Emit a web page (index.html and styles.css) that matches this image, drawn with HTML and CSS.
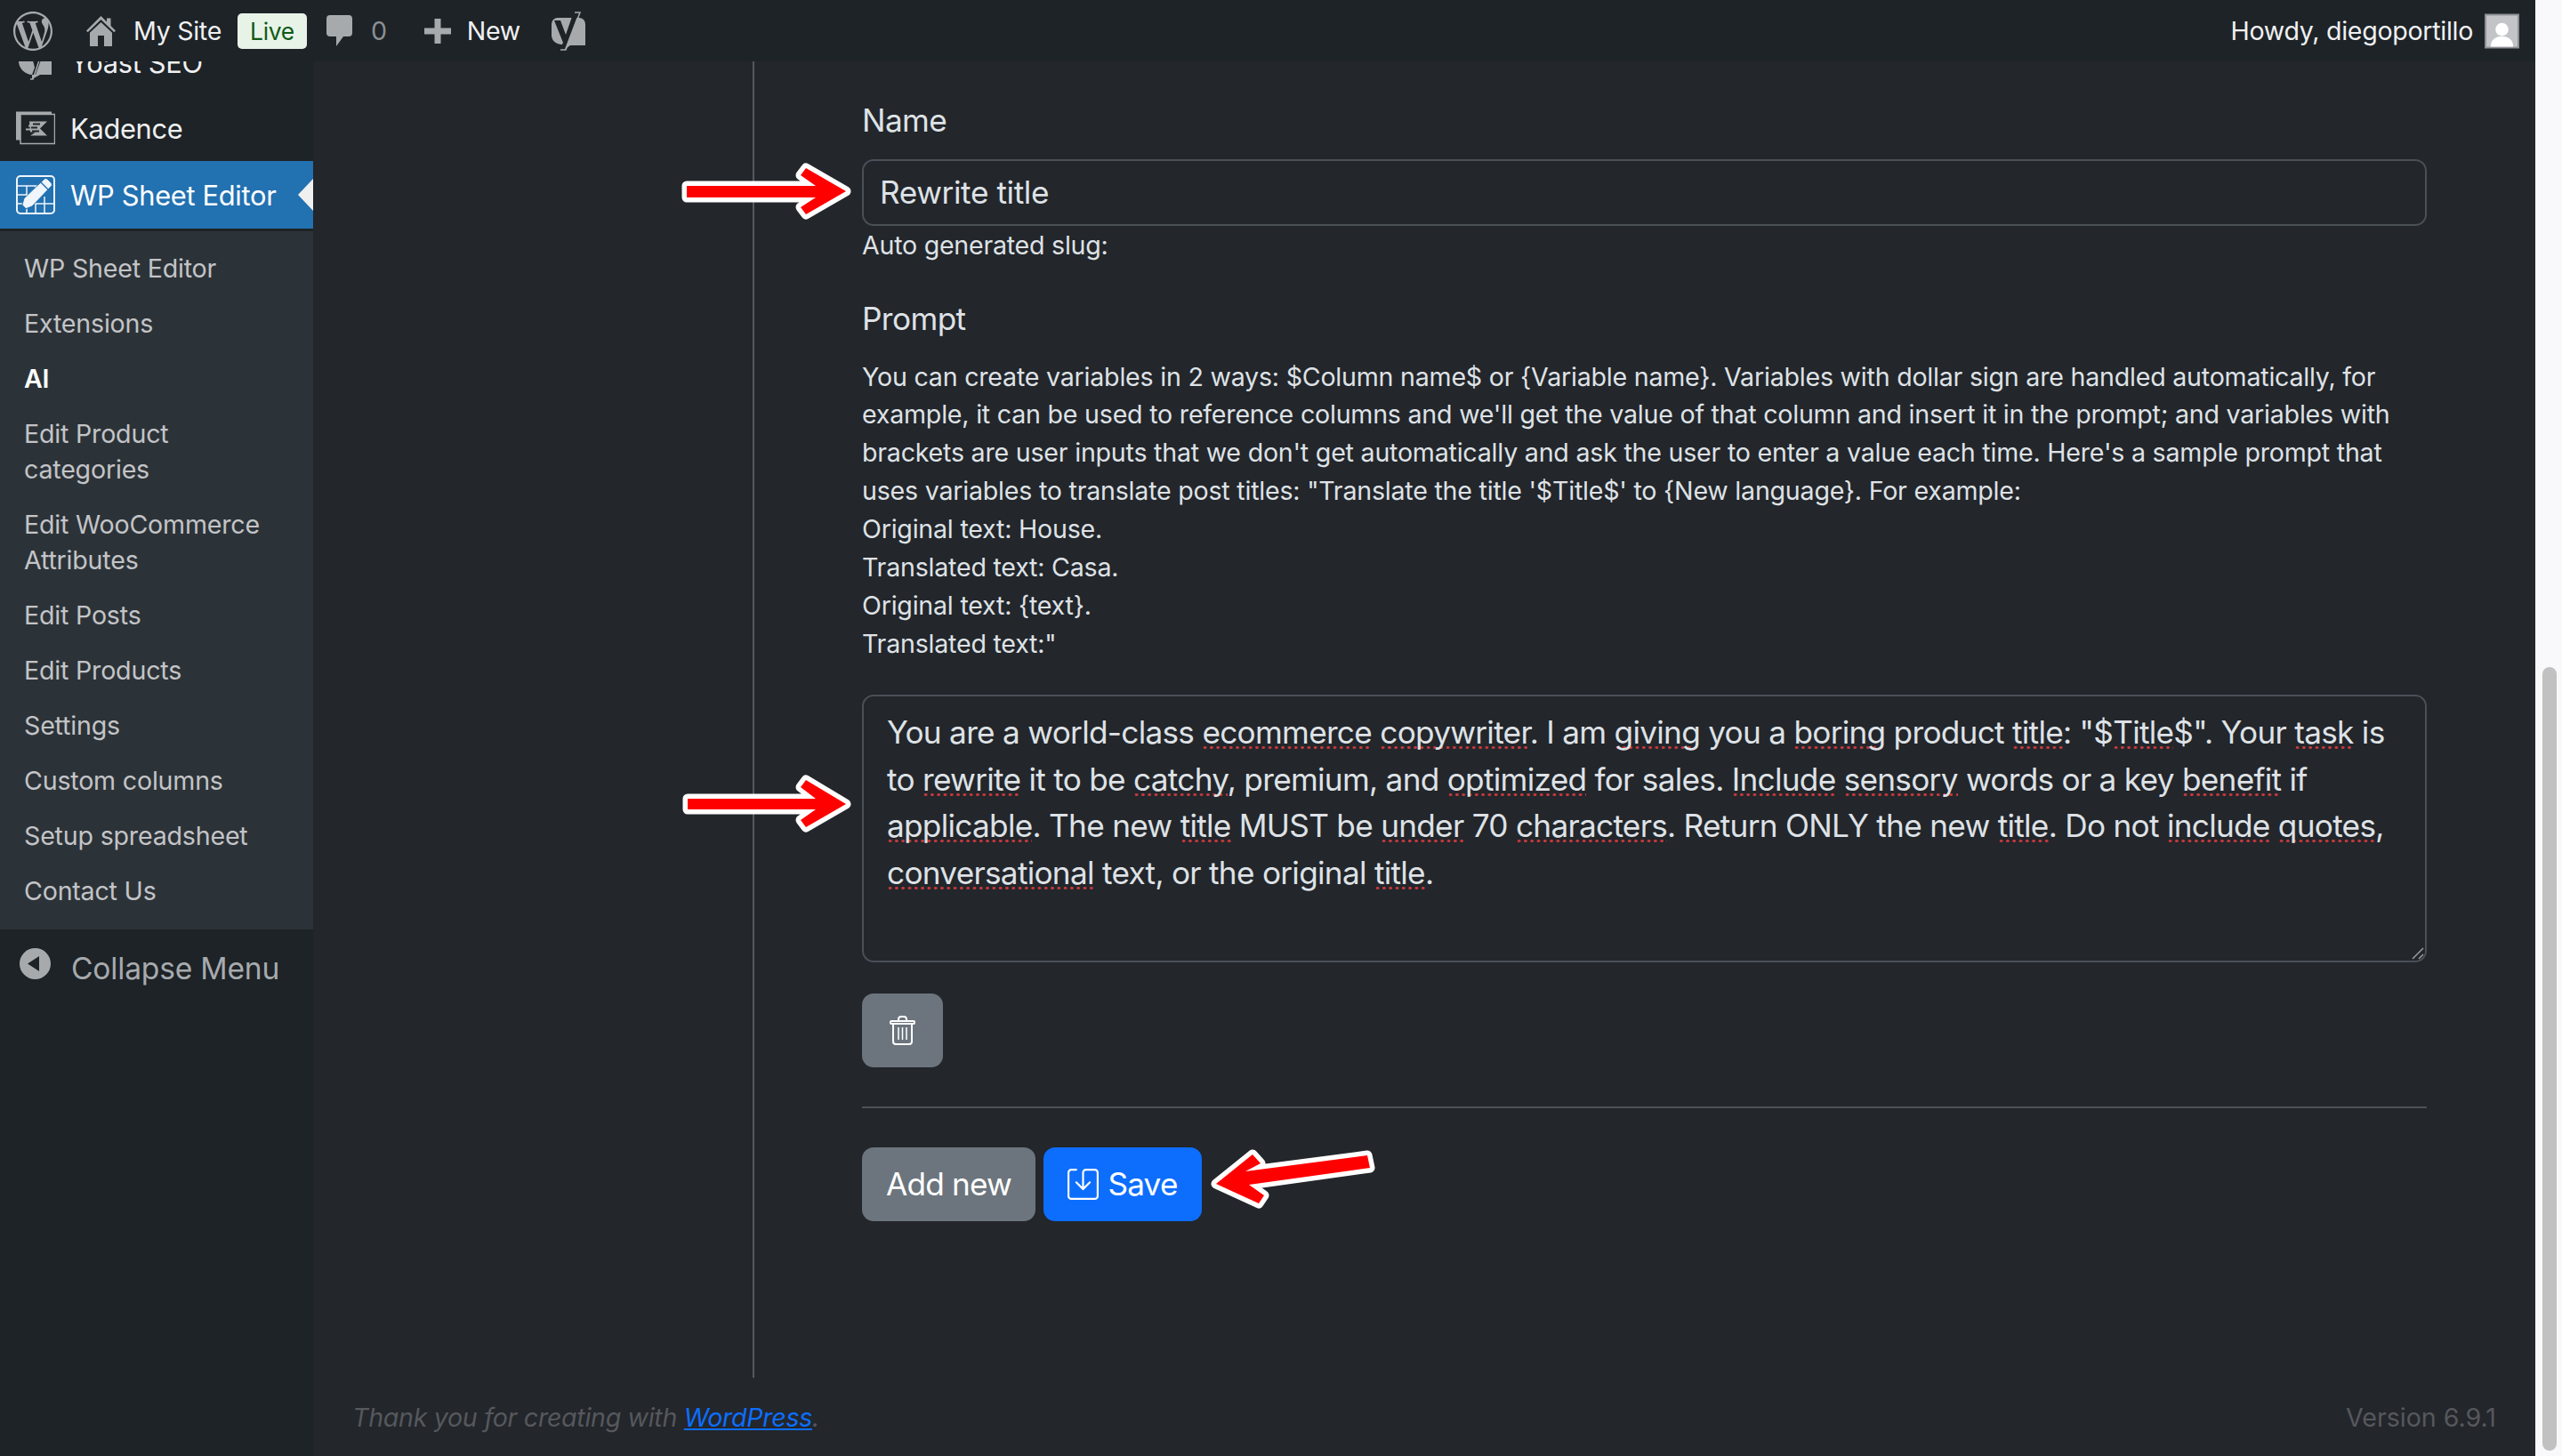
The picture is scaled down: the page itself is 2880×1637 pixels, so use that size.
FILE: index.html
```html
<!DOCTYPE html>
<html lang="en">
<head>
<meta charset="utf-8">
<title>WP Sheet Editor</title>
<link rel="stylesheet" href="styles.css">
</head>
<body>
<div class="window">
  <div class="page">
    <header class="topbar">
      <svg class="wp-logo" viewBox="0 0 24 24"><path fill="#a7aaad" d="M21.469 6.825c.84 1.537 1.318 3.3 1.318 5.175 0 3.979-2.156 7.456-5.363 9.325l3.295-9.527c.615-1.54.82-2.771.82-3.864 0-.405-.026-.78-.07-1.11m-7.981.105c.647-.03 1.232-.105 1.232-.105.582-.075.514-.93-.067-.899 0 0-1.755.135-2.88.135-1.064 0-2.85-.15-2.85-.15-.585-.03-.661.855-.075.885 0 0 .54.061 1.125.09l1.68 4.605-2.37 7.08L5.354 6.9c.649-.03 1.234-.1 1.234-.1.585-.075.516-.93-.065-.896 0 0-1.746.138-2.874.138-.2 0-.438-.008-.69-.015C4.911 3.15 8.235 1.215 12 1.215c2.809 0 5.365 1.072 7.286 2.833-.046-.003-.091-.009-.141-.009-1.06 0-1.812.923-1.812 1.914 0 .89.513 1.643 1.06 2.531.411.72.89 1.643.89 2.977 0 .915-.354 1.994-.821 3.479l-1.075 3.585-3.9-11.61.001.014zM12 22.784c-1.059 0-2.081-.153-3.048-.437l3.237-9.406 3.315 9.087c.024.053.05.101.078.149-1.12.393-2.325.609-3.582.609M1.211 12c0-1.564.336-3.05.935-4.39L7.29 21.709C3.694 19.96 1.212 16.271 1.211 12M12 0C5.385 0 0 5.385 0 12s5.385 12 12 12 12-5.385 12-12S18.615 0 12 0"/></svg>
      <svg class="ic-home" viewBox="0 0 33 34"><path fill="#a7aaad" d="M16.500 0 23 6.500V2.500h4.500V11L33 16.500l-1.700 1.700L16.500 4 1.700 18.200 0 16.500z"/><path fill="#a7aaad" fill-rule="evenodd" d="M16.500 7 29 18.800V34H4V18.800zM13 22v12h7V22z"/></svg>
      <span class="bar-text site">My Site</span>
      <span class="live">Live</span>
      <svg class="ic-comment" viewBox="0 0 29 35"><path fill="#a7aaad" d="M4 0h21a4 4 0 0 1 4 4v16a4 4 0 0 1-4 4H19L11 35V24H4a4 4 0 0 1-4-4V4a4 4 0 0 1 4-4z"/></svg>
      <span class="bar-text zero">0</span>
      <svg class="ic-plus" viewBox="0 0 30 28"><path fill="#a7aaad" d="M11.500 0h7v10.500H30v7H18.500V28h-7V17.500H0v-7h11.500z"/></svg>
      <span class="bar-text new">New</span>
      <svg class="ic-yoast" viewBox="0 0 38 44"><path fill="#a7aaad" d="M7 7h24a7 7 0 0 1 7 7v24H21l-7 5v-5l-3-1a11 11 0 0 1-11-9V14a7 7 0 0 1 7-7z"/><path fill="#1d2327" d="M31 0h-6L16 26 10 10H3l10 25-4 7h6z"/><path fill="none" stroke="#a7aaad" stroke-width="1.500" d="M26 1h6L16 43h-6"/></svg>
      <span class="bar-text howdy">Howdy, diegoportillo</span>
      <svg class="avatar" viewBox="0 0 40 40"><rect width="40" height="40" fill="#8c8f94"/><rect x="2" y="2" width="36" height="36" fill="#c3c4c7"/><circle cx="20" cy="18" r="7.500" fill="#fff"/><path fill="#fff" d="M7 38c0-8 6-12 13-12s13 4 13 12z"/></svg>
    </header>
    <div class="below">
      <nav class="sidebar">
        <a class="menu-item clipped">
          <svg class="menu-ic" viewBox="0 0 44 44"><path fill="#a7aaad" d="M3 0h37v36H27l-9 5V36A16 16 0 0 1 3 22z"/><path fill="#1d2327" d="M14 0h7l3 16 6-16h5L22 36h-4l3-8z"/><path fill="none" stroke="#a7aaad" stroke-width="1.500" d="M30 8 19 41h-3"/></svg>
          <span>Yoast SEO</span>
        </a>
        <a class="menu-item">
          <svg class="menu-ic" viewBox="0 0 44 37"><path fill="#a7aaad" d="M0 0h40v3H5v29H0z"/><rect x="5" y="3" width="38.500" height="33" fill="#1d2327" stroke="#a7aaad" stroke-width="1.500"/><path fill="#a7aaad" d="M15 11h20l-8 8 8 8H16l6-4h-6zM14 15h9v2h-9zM11 19h8v2h-8z"/><path fill="#1d2327" d="M19 13h8v2h-8zM17 17h7v2h-7zM18 21h8v2h-8z"/></svg>
          <span>Kadence</span>
        </a>
        <a class="menu-item active">
          <svg class="menu-ic" viewBox="0 0 44 44"><rect x="1" y="1" width="42" height="42" rx="4" fill="none" stroke="#f0f6fc" stroke-width="2"/><path fill="none" stroke="#f0f6fc" stroke-width="1.500" d="M1 12h30M1 22h14M1 32h42M12 12v32M22 32v12M32 32v12M22 12v6M32 24v8"/><path fill="#f0f6fc" stroke="#2271b1" stroke-width="1" d="M5 40 9 26 31 5a3 3 0 0 1 4-1l5 5a3 3 0 0 1-1 4L18 35z"/><path fill="#2271b1" d="M5 40l2-7 5 5z"/><path fill="none" stroke="#2271b1" stroke-width="1.500" d="M28 8l8 8"/></svg>
          <span>WP Sheet Editor</span>
          <i class="pointer"></i>
        </a>
        <ul class="submenu">
          <li>WP Sheet Editor</li>
          <li>Extensions</li>
          <li class="current">AI</li>
          <li>Edit Product categories</li>
          <li>Edit WooCommerce Attributes</li>
          <li>Edit Posts</li>
          <li>Edit Products</li>
          <li>Settings</li>
          <li>Custom columns</li>
          <li>Setup spreadsheet</li>
          <li>Contact Us</li>
        </ul>
        <a class="collapse">
          <svg class="collapse-ic" viewBox="0 0 35 35"><circle cx="17.500" cy="17.500" r="17.500" fill="#a7aaad"/><path fill="#1d2327" d="M9 17.500 22 9v17z"/></svg>
          <span>Collapse Menu</span>
        </a>
      </nav>
      <main class="main">
        <div class="content">
          <form class="form">
            <label class="label">Name</label>
            <div class="input">Rewrite title</div>
            <p class="slug">Auto generated slug:</p>
            <label class="label prompt-label">Prompt</label>
            <p class="help">You can create variables in 2 ways: $Column name$ or {Variable name}. Variables with dollar sign are handled automatically, for example, it can be used to reference columns and we'll get the value of that column and insert it in the prompt; and variables with brackets are user inputs that we don't get automatically and ask the user to enter a value each time. Here's a sample prompt that uses variables to translate post titles: "Translate the title '$Title$' to {New language}. For example:<br>Original text: House.<br>Translated text: Casa.<br>Original text: {text}.<br>Translated text:"</p>
            <div class="textarea">You are a world-class <span class="sp">ecommerce</span> <span class="sp">copywriter</span>. I am <span class="sp">giving</span> you a <span class="sp">boring</span> product <span class="sp">title</span>: "$<span class="sp">Title</span>$". Your <span class="sp">task</span> is to <span class="sp">rewrite</span> it to be <span class="sp">catchy</span>, premium, and <span class="sp">optimized</span> for sales. <span class="sp">Include</span> <span class="sp">sensory</span> words or a key <span class="sp">benefit</span> if <span class="sp">applicable</span>. The new <span class="sp">title</span> MUST be <span class="sp">under</span> 70 <span class="sp">characters</span>. Return ONLY the new <span class="sp">title</span>. Do not <span class="sp">include</span> <span class="sp">quotes</span>, <span class="sp">conversational</span> text, or the original <span class="sp">title</span>.
              <svg class="grip" viewBox="0 0 14 14"><path fill="none" stroke="#9a9da1" stroke-width="1.500" d="M1 13 13 1M8 13l5-5"/></svg>
            </div>
            <button class="btn btn-grey btn-trash" type="button">
              <svg class="ic-trash" viewBox="0 0 29 33"><g fill="none" stroke="#fff" stroke-width="2"><path d="M2 6h25a1 1 0 0 1 1 1v1a1 1 0 0 1-1 1H2a1 1 0 0 1-1-1V7a1 1 0 0 1 1-1zM10 6V4a3 3 0 0 1 3-3h3a3 3 0 0 1 3 3v2M4 9v20a3 3 0 0 0 3 3h15a3 3 0 0 0 3-3V9"/><path stroke-width="1.500" d="M10 13v14M14.500 13v14M19 13v14"/></g></svg>
            </button>
            <hr class="rule">
            <div class="actions">
              <button class="btn btn-grey" type="button">Add new</button>
              <button class="btn btn-blue" type="button">
                <svg class="ic-save" viewBox="0 0 16 16"><path fill="#fff" d="M2 1a1 1 0 0 0-1 1v12a1 1 0 0 0 1 1h12a1 1 0 0 0 1-1V2a1 1 0 0 0-1-1H9.500a1 1 0 0 0-1 1v7.293l2.646-2.647a.5.5 0 0 1 .708.708l-3.500 3.500a.5.5 0 0 1-.708 0l-3.500-3.500a.5.5 0 1 1 .708-.708L7.500 9.293V2a2 2 0 0 1 2-2H14a2 2 0 0 1 2 2v12a2 2 0 0 1-2 2H2a2 2 0 0 1-2-2V2a2 2 0 0 1 2-2h2.500a.5.5 0 0 1 0 1H2z"/></svg>
                Save
              </button>
            </div>
          </form>
        </div>
        <footer class="footer">
          <span class="thanks">Thank you for creating with <a class="wp-link">WordPress</a>.</span>
          <span>Version 6.9.1</span>
        </footer>
      </main>
    </div>
  </div>
  <aside class="scrollbar"><div class="thumb"></div></aside>
  <svg class="arrows" viewBox="0 0 2880 1637">
    <polygon class="arrow" points="772,209 917,209 900,197 906,189 951,215 906,241 900,233 917,222 772,222"/>
    <polygon class="arrow" points="773,898 917,898 900,885 906,877 951,904 906,930 900,922 917,910 773,910"/>
    <polygon class="arrow" points="1367,1331 1408,1298 1417,1308 1400,1317 1537,1299 1540,1313 1404,1332 1421,1344 1415,1353"/>
  </svg>
</div>
</body>
</html>
```
FILE: styles.css
```css
* { box-sizing: border-box; }
html, body { margin: 0; height: 100%; overflow: hidden; }
body { font-family: Inter, "Liberation Sans", sans-serif; background: #23262b; color: #dee2e6; }
.window { display: flex; height: 1637px; position: relative; overflow: hidden; }
.page { width: 2850px; display: flex; flex-direction: column; }

.topbar { height: 69px; flex: none; background: #1d2327; display: flex; align-items: center; color: #f0f0f1; font-size: 28.6px; letter-spacing: -0.3px; }
.topbar svg { display: block; flex: none; }
.wp-logo { width: 44px; height: 44px; margin-left: 15px; }
.ic-home { width: 33px; height: 34px; margin-left: 38px; }
.bar-text { line-height: 40px; }
.site { margin-left: 20px; }
.live { margin-left: 18px; width: 78px; height: 40px; line-height: 40px; text-align: center; background: #e8f3e8; color: #0f5a16; border-radius: 5px; font-size: 26.4px; }
.ic-comment { width: 29px; height: 35px; margin-left: 22px; }
.zero { margin-left: 21px; color: #8c8f94; }
.ic-plus { width: 30px; height: 28px; margin-left: 42px; }
.new { margin-left: 18px; }
.ic-yoast { width: 38px; height: 44px; margin-left: 35px; }
.howdy { margin-left: auto; }
.avatar { width: 39px; height: 40px; margin-left: 13px; margin-right: 18px; }

.below { flex: 1; display: flex; min-height: 0; }
.sidebar { width: 352px; flex: none; background: #1d2327; overflow: hidden; }
.menu-item { height: 74px; display: flex; align-items: center; padding-left: 18px; font-size: 30.8px; letter-spacing: -0.3px; color: #f0f0f1; position: relative; }
.menu-ic { width: 44px; height: 44px; flex: none; margin-right: 17px; display: block; }
.clipped { margin-top: -36px; }
.active { height: 76px; background: #2271b1; color: #fff; }
.pointer { position: absolute; right: 0; top: 20px; border: 18px solid transparent; border-right: 17px solid #f0f0f1; border-left: 0; }
.submenu { list-style: none; margin: 3px 0 0; padding: 11px 40px 13px 27px; height: 785px; background: #2c3338; color: #c3c4c7; font-size: 28.6px; letter-spacing: -0.2px; line-height: 40px; }
.submenu li { padding: 11px 0; }
.submenu .current { color: #fff; font-weight: 600; }
.collapse { display: flex; align-items: flex-start; padding: 21px 0 0 22px; color: #a7aaad; font-size: 33.6px; letter-spacing: -0.2px; }
.collapse-ic { width: 35px; height: 35px; flex: none; margin-right: 23px; }
.collapse span { line-height: 44px; margin-top: 1px; }

.main { flex: 1; min-width: 0; padding-left: 0; }
.content { margin-left: 494px; height: 1480px; border-left: 2px solid #55585d; padding: 40px 122px 0 121px; }
.form { display: block; }
.label { display: block; font-size: 35.2px; line-height: 52.8px; letter-spacing: -0.6px; color: #dee2e6; }
.input { margin-top: 17px; height: 75px; border: 2px solid #495057; border-radius: 13px; padding: 0 18px; font-size: 35.2px; letter-spacing: -0.4px; line-height: 71px; color: #dee2e6; }
.slug { margin: 1px 0 0; font-size: 28.6px; letter-spacing: -0.25px; line-height: 42.9px; }
.prompt-label { margin-top: 34px; }
.help { margin: 18px 0 0; font-size: 28.6px; letter-spacing: -0.22px; line-height: 42.9px; }
.textarea { margin-top: 35px; height: 301px; border: 2px solid #495057; border-radius: 13px; padding: 14px 26px; font-size: 35.2px; letter-spacing: -0.72px; line-height: 52.8px; color: #dee2e6; position: relative; }
.sp { background-image: radial-gradient(circle at 3.6px 1.500px, #c7393c 1.500px, transparent 1.900px); background-size: 7.300px 3px; background-repeat: repeat-x; background-position: 0 calc(100% - 2px); }
.grip { position: absolute; right: 1px; bottom: 1px; width: 14px; height: 14px; }
.btn { display: inline-flex; align-items: center; justify-content: center; height: 83px; border: 0; border-radius: 13px; padding: 0 28px; font: inherit; font-size: 35.2px; letter-spacing: -0.8px; color: #fff; }
.btn-grey { background: #6c757d; }
.btn-blue { background: #0d6efd; margin-left: 9px; width: 178px; padding: 0; gap: 10px; }
.btn-trash { display: flex; width: 91px; margin-top: 35px; padding: 0; }
.ic-trash { width: 29px; height: 33px; }
.ic-save { width: 35px; height: 35px; }
.rule { margin: 44px 0 44px; border: 0; border-top: 2px solid #4d5055; }
.actions { display: flex; }
.actions .btn-grey { width: 195px; padding: 0; }

.footer { display: flex; justify-content: space-between; padding: 24px 44px 0 44px; font-size: 28.6px; line-height: 42.9px; color: #55585d; }
.thanks { font-style: italic; letter-spacing: -0.3px; }
.wp-link { color: #0d6efd; text-decoration: underline; }

.scrollbar { width: 30px; flex: none; background: #f9f9fb; padding: 750px 6px 0 8px; }
.thumb { height: 881px; background: #c1c1c1; border-radius: 8px; }
.arrows { position: absolute; left: 0; top: 0; width: 2880px; height: 1637px; pointer-events: none; }
.arrow { fill: #f00; stroke: #fff; stroke-width: 11; stroke-linejoin: round; paint-order: stroke; }
```
